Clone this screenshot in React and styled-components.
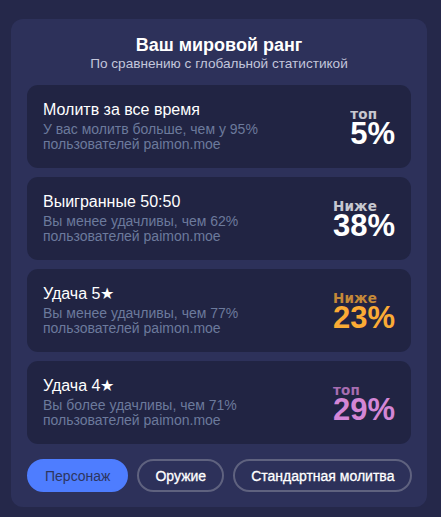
import React from "react";
import styled, { createGlobalStyle } from "styled-components";

const Global = createGlobalStyle`
  html, body { margin: 0; padding: 0; background: #25284a; }
  body { font-family: "Liberation Sans", Arial, sans-serif; }
`;

const Page = styled.div`
  padding: 19px 14px 12px 11px;
  min-height: 517px;
  box-sizing: border-box;
  background: #25284a;
`;

const Card = styled.div`
  background: #2d315a;
  border-radius: 12px;
  padding: 16px 16px 15px;
  display: flex;
  flex-direction: column;
`;

const Header = styled.div`
  text-align: center;
  margin-bottom: 14px;
`;

const Title = styled.div`
  color: #fff;
  font-weight: 700;
  font-size: 18px;
  line-height: 21px;
`;

const Subtitle = styled.div`
  color: #c3c6da;
  font-size: 13.6px;
  line-height: 15px;
`;

const List = styled.div`
  display: flex;
  flex-direction: column;
  gap: 9px;
`;

const Item = styled.div`
  background: #212443;
  border-radius: 11px;
  height: 83px;
  box-sizing: border-box;
  padding: 0 16px;
  display: flex;
  align-items: center;
  justify-content: space-between;
`;

const Info = styled.div`
  display: flex;
  flex-direction: column;
`;

const ItemTitle = styled.div`
  color: #fff;
  font-size: 16px;
  line-height: 18px;
  margin-bottom: 3px;
`;

const Desc = styled.div`
  color: #6c7a9c;
  font-size: 14px;
  line-height: 15px;
  max-width: 240px;
`;

const Rank = styled.div`
  display: flex;
  flex-direction: column;
  align-items: flex-start;
  color: ${(p) => p.$color};
  margin-top: 2px;
`;

const RankLabel = styled.div`
  font-family: "DejaVu Sans", Verdana, sans-serif;
  font-size: 13.5px;
  font-weight: 700;
  line-height: 12px;
  opacity: 0.75;
  letter-spacing: 0.2px;
`;

const RankValue = styled.div`
  font-size: 31px;
  font-weight: 700;
  line-height: 27px;
`;

const Tabs = styled.div`
  display: flex;
  gap: 9px;
  margin-top: 15px;
`;

const Tab = styled.button`
  height: 33px;
  border-radius: 17px;
  padding: 0 16px;
  white-space: nowrap;
  font-family: "Liberation Sans", Arial, sans-serif;
  font-size: 14px;
  font-weight: 400;
  border: 2px solid ${(p) => (p.$active ? "#4e7dff" : "#5f627f")};
  background: ${(p) => (p.$active ? "#4e7dff" : "transparent")};
  color: ${(p) => (p.$active ? "#2d3560" : "#fff")};
  -webkit-text-stroke: ${(p) => (p.$active ? "0" : "0.3px #fff")};
  cursor: pointer;
`;

const items = [
  { title: "Молитв за все время", desc: "У вас молитв больше, чем у 95% пользователей paimon.moe", label: "топ", value: "5%", color: "#ffffff" },
  { title: "Выигранные 50:50", desc: "Вы менее удачливы, чем 62% пользователей paimon.moe", label: "Ниже", value: "38%", color: "#ffffff" },
  { title: "Удача 5★", desc: "Вы менее удачливы, чем 77% пользователей paimon.moe", label: "Ниже", value: "23%", color: "#fbab35" },
  { title: "Удача 4★", desc: "Вы более удачливы, чем 71% пользователей paimon.moe", label: "топ", value: "29%", color: "#d486d6" },
];

export default function App() {
  return (
    <>
      <Global />
      <Page>
        <Card>
          <Header>
            <Title>Ваш мировой ранг</Title>
            <Subtitle>По сравнению с глобальной статистикой</Subtitle>
          </Header>
          <List>
            {items.map((it) => (
              <Item key={it.title}>
                <Info>
                  <ItemTitle>{it.title}</ItemTitle>
                  <Desc>{it.desc}</Desc>
                </Info>
                <Rank $color={it.color}>
                  <RankLabel>{it.label}</RankLabel>
                  <RankValue>{it.value}</RankValue>
                </Rank>
              </Item>
            ))}
          </List>
          <Tabs>
            <Tab $active>Персонаж</Tab>
            <Tab>Оружие</Tab>
            <Tab>Стандартная молитва</Tab>
          </Tabs>
        </Card>
      </Page>
    </>
  );
}
